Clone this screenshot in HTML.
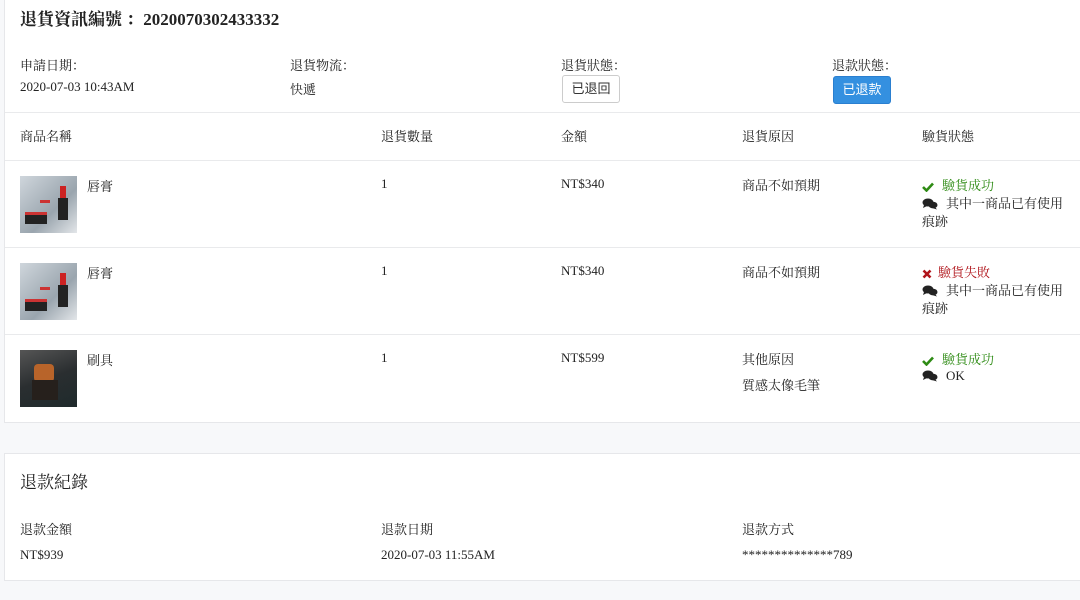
<!DOCTYPE html>
<html><head><meta charset="utf-8"><style>
*{margin:0;padding:0;box-sizing:border-box}
body{width:1080px;height:600px;background:#f7f8fa;font-family:"Liberation Serif","Noto Serif CJK SC",serif;font-size:13px;color:#222;position:relative;overflow:hidden}
.card{position:absolute;left:4px;width:1090px;background:#fff;border:1px solid #e6e7ea}
.a{position:absolute;white-space:nowrap}
.hl{position:absolute;left:0;right:0;height:1px;background:#e9eaec}
.btn{position:absolute;height:28px;border-radius:3px;font-family:"Liberation Sans","Noto Sans CJK SC",sans-serif;font-size:13px;line-height:26px;text-align:center}
.img{position:absolute;width:57px;height:57px}
.g{color:#2e8b14}.r{color:#b0151b}
.ic{display:inline-block;vertical-align:-2px;margin-right:8px}
</style></head><body>
<svg width="0" height="0" style="position:absolute"><defs>
<symbol id="cm" viewBox="0 0 16 12"><ellipse cx="6" cy="4.5" rx="5.5" ry="4" fill="#222"/><path d="M2 7 L1 10 L5 8z" fill="#222"/><ellipse cx="11" cy="7" rx="4.5" ry="3.3" fill="#222"/><path d="M13 9 L15 11.5 L10 10z" fill="#222"/></symbol>
<symbol id="ck" viewBox="0 0 12 10"><path d="M1 5 L4.5 8.5 L11 1.5" stroke="#2e8b14" stroke-width="2.6" fill="none"/></symbol>
<symbol id="xx" viewBox="0 0 10 10"><path d="M1.5 1.5 L8.5 8.5 M8.5 1.5 L1.5 8.5" stroke="#b0151b" stroke-width="2.6"/></symbol>
</defs></svg>
<div class="card" style="top:-1px;height:424px">
 <div class="a" style="left:15px;top:5px;font-size:17px;font-weight:bold">退貨資訊編號 ：2020070302433332</div>
 <div class="a" style="left:15px;top:55px">申請日期：</div>
 <div class="a" style="left:15px;top:79px">2020-07-03 10:43AM</div>
 <div class="a" style="left:285px;top:55px">退貨物流：</div>
 <div class="a" style="left:285px;top:79px">快遞</div>
 <div class="a" style="left:556px;top:55px">退貨狀態：</div>
 <div class="btn" style="left:557px;top:75px;width:58px;border:1px solid #ccc;background:#fff;color:#333">已退回</div>
 <div class="a" style="left:827px;top:55px">退款狀態：</div>
 <div class="btn" style="left:828px;top:76px;width:58px;border:1px solid #2a7fd0;background:#3490e0;color:#fff">已退款</div>
 <div class="hl" style="top:112px"></div>
 <div class="a" style="left:15px;top:126px">商品名稱</div>
 <div class="a" style="left:376px;top:126px">退貨數量</div>
 <div class="a" style="left:556px;top:126px">金額</div>
 <div class="a" style="left:737px;top:126px">退貨原因</div>
 <div class="a" style="left:917px;top:126px">驗貨狀態</div>
 <div class="hl" style="top:160px"></div>
 <!-- row1 -->
 <div class="img" style="left:15px;top:176px;background:linear-gradient(135deg,#cfd6dc,#9aa5ae 60%,#e3e6e9)"><div style="position:absolute;left:5px;top:36px;width:22px;height:12px;background:#222;border-top:3px solid #c33"></div><div style="position:absolute;left:40px;top:10px;width:6px;height:12px;background:#c22"></div><div style="position:absolute;left:38px;top:22px;width:10px;height:22px;background:#222"></div><div style="position:absolute;left:20px;top:24px;width:10px;height:3px;background:#c33"></div></div>
 <div class="a" style="left:82px;top:176px">唇膏</div>
 <div class="a" style="left:376px;top:176px">1</div>
 <div class="a" style="left:556px;top:176px">NT$340</div>
 <div class="a" style="left:737px;top:175px">商品不如預期</div>
 <div class="a g" style="left:917px;top:175px"><svg class="ic" width="12" height="10"><use href="#ck"/></svg>驗貨成功</div>
 <div class="a" style="left:917px;top:193px"><svg class="ic" width="16" height="12"><use href="#cm"/></svg>其中一商品已有使用</div>
 <div class="a" style="left:917px;top:211px">痕跡</div>
 <div class="hl" style="top:247px"></div>
 <!-- row2 -->
 <div class="img" style="left:15px;top:263px;background:linear-gradient(135deg,#cfd6dc,#9aa5ae 60%,#e3e6e9)"><div style="position:absolute;left:5px;top:36px;width:22px;height:12px;background:#222;border-top:3px solid #c33"></div><div style="position:absolute;left:40px;top:10px;width:6px;height:12px;background:#c22"></div><div style="position:absolute;left:38px;top:22px;width:10px;height:22px;background:#222"></div><div style="position:absolute;left:20px;top:24px;width:10px;height:3px;background:#c33"></div></div>
 <div class="a" style="left:82px;top:263px">唇膏</div>
 <div class="a" style="left:376px;top:263px">1</div>
 <div class="a" style="left:556px;top:263px">NT$340</div>
 <div class="a" style="left:737px;top:262px">商品不如預期</div>
 <div class="a r" style="left:917px;top:262px"><svg class="ic" width="10" height="10" style="margin-right:6px"><use href="#xx"/></svg>驗貨失敗</div>
 <div class="a" style="left:917px;top:280px"><svg class="ic" width="16" height="12"><use href="#cm"/></svg>其中一商品已有使用</div>
 <div class="a" style="left:917px;top:298px">痕跡</div>
 <div class="hl" style="top:334px"></div>
 <!-- row3 -->
 <div class="img" style="left:15px;top:350px;background:linear-gradient(160deg,#555,#2a2e30 50%,#1f2a2c)"><div style="position:absolute;left:14px;top:14px;width:20px;height:18px;background:#b8642a;border-radius:4px"></div><div style="position:absolute;left:12px;top:30px;width:26px;height:20px;background:#26201c"></div></div>
 <div class="a" style="left:82px;top:350px">刷具</div>
 <div class="a" style="left:376px;top:350px">1</div>
 <div class="a" style="left:556px;top:350px">NT$599</div>
 <div class="a" style="left:737px;top:349px">其他原因</div>
 <div class="a" style="left:737px;top:375px">質感太像毛筆</div>
 <div class="a g" style="left:917px;top:349px"><svg class="ic" width="12" height="10"><use href="#ck"/></svg>驗貨成功</div>
 <div class="a" style="left:917px;top:368px"><svg class="ic" width="16" height="12"><use href="#cm"/></svg>OK</div>
</div>
<div class="card" style="top:453px;height:128px">
 <div class="a" style="left:15px;top:14px;font-size:17px">退款紀錄</div>
 <div class="a" style="left:15px;top:65px">退款金額</div>
 <div class="a" style="left:15px;top:93px">NT$939</div>
 <div class="a" style="left:376px;top:65px">退款日期</div>
 <div class="a" style="left:376px;top:93px">2020-07-03 11:55AM</div>
 <div class="a" style="left:737px;top:65px">退款方式</div>
 <div class="a" style="left:737px;top:93px">**************789</div>
</div>
</body></html>
